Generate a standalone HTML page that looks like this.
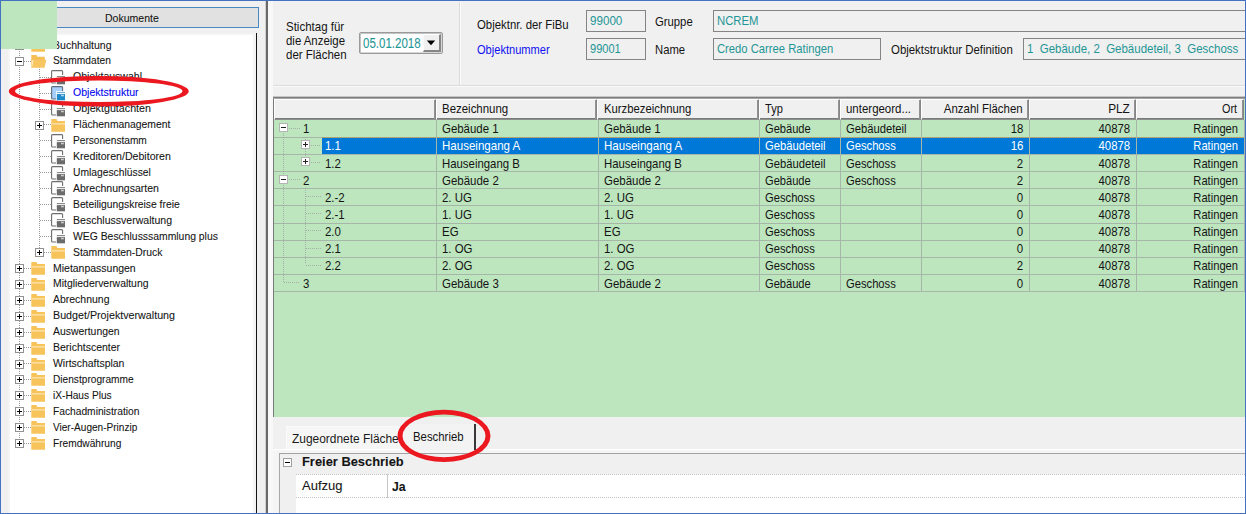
<!DOCTYPE html>
<html lang="de"><head><meta charset="utf-8"><title>Objektstruktur</title>
<style>
html,body{margin:0;padding:0}
body{width:1246px;height:514px;position:relative;overflow:hidden;background:#f0f0f0;font-family:'Liberation Sans',sans-serif;font-size:11px;color:#141414}
div,span.t,svg{position:absolute;box-sizing:border-box}
span.t{white-space:pre;display:block;}
span.k{-webkit-text-stroke:0.08px currentColor}
.hd{background:#f0f0f0;border-top:1px solid #fff;border-left:1px solid #fff;border-right:1px solid #868686;border-bottom:1px solid #8a908a;box-shadow:inset -1px 0 #929292,inset 0 -1px #7a7a7a}
.fld{background:#f0f0f0;border:1px solid #848484}
.ex{width:9px;height:9px;background:#fff;border:1px solid #919191}
.ex i{position:absolute;left:1px;top:2.8px;width:5px;height:1.4px;background:#000}
.ex b{position:absolute;left:2.8px;top:1px;width:1.4px;height:5px;background:#000}
.gx{border-color:#b4b4b4}
.gx i{top:3px;height:1.3px;background:#222}
.gx b{left:2.85px;width:1.3px;background:#222}
.dh{height:1px;background-image:linear-gradient(to right,#9a9a9a 50%,transparent 50%);background-size:2px 1px}
.dv{width:1px;background-image:linear-gradient(to bottom,#9a9a9a 50%,transparent 50%);background-size:1px 2px}
</style></head><body>

<div style="left:8px;top:7px;width:251px;height:21px;background:#e1e1e1;border:1px solid #4a88c2"></div>
<span class="t k" style="top:9.63px;font-size:11.5px;line-height:16px;left:104.9px;transform-origin:0 50%;transform:scaleX(0.9148);">Dokumente</span>
<div style="left:8px;top:33px;width:248px;height:481px;background:#f4f4f4"></div>
<div style="left:10px;top:35px;width:242.5px;height:479px;background:#fff"></div>
<div style="left:256px;top:33px;width:1.4px;height:481px;background:#141414"></div>
<div style="left:265px;top:1px;width:1px;height:513px;background:#d0d0d0"></div>
<div style="left:266px;top:1px;width:2px;height:513px;background:#686868"></div>
<div style="left:268px;top:1px;width:5px;height:513px;background:#f8f8f8"></div>
<div class="dv" style="left:19px;top:45px;width:1px;height:398px;"></div>
<div class="dv" style="left:39px;top:67px;width:1px;height:185px;"></div>
<div class="dh" style="left:24px;top:45px;width:7px;height:1px;"></div>
<div class="ex" style="left:15px;top:41px"><i></i><b></b></div>
<svg style="left:31px;top:38.9px" width="14" height="13" viewBox="0 0 14 13"><path d="M0.3 0h5.3l0.6 2.1H14v10.7H0.3z" fill="#f7c35b"/><rect x="1" y="4.4" width="13" height="1" fill="#fdeec9"/></svg>
<span class="t k" style="top:36.53px;font-size:11.5px;line-height:16px;left:53px;transform-origin:0 50%;transform:scaleX(0.9163);">Buchhaltung</span>
<div class="dh" style="left:24px;top:61px;width:7px;height:1px;"></div>
<div class="ex" style="left:15px;top:57px"><i></i></div>
<svg style="left:31px;top:54.83px" width="16" height="13" viewBox="0 0 16 13"><path d="M0.3 0h5.3l0.6 1.7H13.8v3.2H0.3z" fill="#f5bf56"/><path d="M0.3 4v8.8h1.5V4z" fill="#f5bf56"/><path d="M2 4.8h13.4l-1.9 8H0.4z" fill="#f8c660"/><path d="M2.1 5L0.7 12" stroke="#fff3d8" stroke-width="0.9" fill="none"/></svg>
<span class="t k" style="top:52.46px;font-size:11.5px;line-height:16px;left:53px;transform-origin:0 50%;transform:scaleX(0.8865);">Stammdaten</span>
<div class="dh" style="left:40px;top:77px;width:11px;height:1px;"></div>
<svg style="left:51px;top:69.96px" width="15" height="16" viewBox="0 0 15 16"><path d="M5.5 13H1.6Q0.6 13 0.6 12V1.6Q0.6 0.6 1.6 0.6H10.6Q11.6 0.6 11.6 1.6V5.2" fill="none" stroke="#6e6e6e" stroke-width="1.1"/><rect x="5" y="5.2" width="10" height="10" fill="#fff"/><rect x="5.8" y="6" width="8.2" height="1.1" fill="#8a8a8a"/><rect x="5.8" y="7.1" width="8.2" height="1" fill="#ececec"/><rect x="5.8" y="8.1" width="8.2" height="6.2" fill="#6b6b6b"/><rect x="10" y="8.8" width="2.8" height="1.5" fill="#cdcdcd"/></svg>
<span class="t k" style="top:68.39px;font-size:11.5px;line-height:16px;left:73px;transform-origin:0 50%;transform:scaleX(0.9147);">Objektauswahl</span>
<div class="dh" style="left:40px;top:93px;width:11px;height:1px;"></div>
<svg style="left:51px;top:85.89px" width="15" height="16" viewBox="0 0 15 16"><path d="M5.5 13H1.6Q0.6 13 0.6 12V1.6Q0.6 0.6 1.6 0.6H10.6Q11.6 0.6 11.6 1.6V13H5.5z" fill="#a8cefa" stroke="#5f6f80" stroke-width="1.1"/><rect x="5" y="5.2" width="10" height="10" fill="#fff"/><rect x="5.8" y="6" width="8.2" height="1.1" fill="#6fb2de"/><rect x="5.8" y="7.1" width="8.2" height="1" fill="#eaf4fb"/><rect x="5.8" y="8.1" width="8.2" height="6.2" fill="#1e88c8"/><rect x="10" y="8.8" width="2.8" height="1.5" fill="#b5dcf2"/></svg>
<span class="t k" style="top:84.32px;font-size:11.5px;line-height:16px;left:73px;transform-origin:0 50%;transform:scaleX(0.9151);color:#0000f0;">Objektstruktur</span>
<div class="dh" style="left:40px;top:109px;width:11px;height:1px;"></div>
<svg style="left:51px;top:101.82px" width="15" height="16" viewBox="0 0 15 16"><path d="M5.5 13H1.6Q0.6 13 0.6 12V1.6Q0.6 0.6 1.6 0.6H10.6Q11.6 0.6 11.6 1.6V5.2" fill="none" stroke="#6e6e6e" stroke-width="1.1"/><rect x="5" y="5.2" width="10" height="10" fill="#fff"/><rect x="5.8" y="6" width="8.2" height="1.1" fill="#8a8a8a"/><rect x="5.8" y="7.1" width="8.2" height="1" fill="#ececec"/><rect x="5.8" y="8.1" width="8.2" height="6.2" fill="#6b6b6b"/><rect x="10" y="8.8" width="2.8" height="1.5" fill="#cdcdcd"/></svg>
<span class="t k" style="top:100.25px;font-size:11.5px;line-height:16px;left:73px;transform-origin:0 50%;transform:scaleX(0.9312);">Objektgutachten</span>
<div class="dh" style="left:40px;top:124px;width:11px;height:1px;"></div>
<div class="ex" style="left:35px;top:121px"><i></i><b></b></div>
<svg style="left:51px;top:118.55px" width="14" height="13" viewBox="0 0 14 13"><path d="M0.3 0h5.3l0.6 2.1H14v10.7H0.3z" fill="#f7c35b"/><rect x="1" y="4.4" width="13" height="1" fill="#fdeec9"/></svg>
<span class="t k" style="top:116.18px;font-size:11.5px;line-height:16px;left:73px;transform-origin:0 50%;transform:scaleX(0.9015);">Flächenmanagement</span>
<div class="dh" style="left:40px;top:140px;width:11px;height:1px;"></div>
<svg style="left:51px;top:133.68px" width="15" height="16" viewBox="0 0 15 16"><path d="M5.5 13H1.6Q0.6 13 0.6 12V1.6Q0.6 0.6 1.6 0.6H10.6Q11.6 0.6 11.6 1.6V5.2" fill="none" stroke="#6e6e6e" stroke-width="1.1"/><rect x="5" y="5.2" width="10" height="10" fill="#fff"/><rect x="5.8" y="6" width="8.2" height="1.1" fill="#8a8a8a"/><rect x="5.8" y="7.1" width="8.2" height="1" fill="#ececec"/><rect x="5.8" y="8.1" width="8.2" height="6.2" fill="#6b6b6b"/><rect x="10" y="8.8" width="2.8" height="1.5" fill="#cdcdcd"/></svg>
<span class="t k" style="top:132.11px;font-size:11.5px;line-height:16px;left:73px;transform-origin:0 50%;transform:scaleX(0.8814);">Personenstamm</span>
<div class="dh" style="left:40px;top:156px;width:11px;height:1px;"></div>
<svg style="left:51px;top:149.61px" width="15" height="16" viewBox="0 0 15 16"><path d="M5.5 13H1.6Q0.6 13 0.6 12V1.6Q0.6 0.6 1.6 0.6H10.6Q11.6 0.6 11.6 1.6V5.2" fill="none" stroke="#6e6e6e" stroke-width="1.1"/><rect x="5" y="5.2" width="10" height="10" fill="#fff"/><rect x="5.8" y="6" width="8.2" height="1.1" fill="#8a8a8a"/><rect x="5.8" y="7.1" width="8.2" height="1" fill="#ececec"/><rect x="5.8" y="8.1" width="8.2" height="6.2" fill="#6b6b6b"/><rect x="10" y="8.8" width="2.8" height="1.5" fill="#cdcdcd"/></svg>
<span class="t k" style="top:148.04px;font-size:11.5px;line-height:16px;left:73px;transform-origin:0 50%;transform:scaleX(0.9225);">Kreditoren/Debitoren</span>
<div class="dh" style="left:40px;top:172px;width:11px;height:1px;"></div>
<svg style="left:51px;top:165.54px" width="15" height="16" viewBox="0 0 15 16"><path d="M5.5 13H1.6Q0.6 13 0.6 12V1.6Q0.6 0.6 1.6 0.6H10.6Q11.6 0.6 11.6 1.6V5.2" fill="none" stroke="#6e6e6e" stroke-width="1.1"/><rect x="5" y="5.2" width="10" height="10" fill="#fff"/><rect x="5.8" y="6" width="8.2" height="1.1" fill="#8a8a8a"/><rect x="5.8" y="7.1" width="8.2" height="1" fill="#ececec"/><rect x="5.8" y="8.1" width="8.2" height="6.2" fill="#6b6b6b"/><rect x="10" y="8.8" width="2.8" height="1.5" fill="#cdcdcd"/></svg>
<span class="t k" style="top:163.97px;font-size:11.5px;line-height:16px;left:73px;transform-origin:0 50%;transform:scaleX(0.8949);">Umlageschlüssel</span>
<div class="dh" style="left:40px;top:188px;width:11px;height:1px;"></div>
<svg style="left:51px;top:181.47px" width="15" height="16" viewBox="0 0 15 16"><path d="M5.5 13H1.6Q0.6 13 0.6 12V1.6Q0.6 0.6 1.6 0.6H10.6Q11.6 0.6 11.6 1.6V5.2" fill="none" stroke="#6e6e6e" stroke-width="1.1"/><rect x="5" y="5.2" width="10" height="10" fill="#fff"/><rect x="5.8" y="6" width="8.2" height="1.1" fill="#8a8a8a"/><rect x="5.8" y="7.1" width="8.2" height="1" fill="#ececec"/><rect x="5.8" y="8.1" width="8.2" height="6.2" fill="#6b6b6b"/><rect x="10" y="8.8" width="2.8" height="1.5" fill="#cdcdcd"/></svg>
<span class="t k" style="top:179.9px;font-size:11.5px;line-height:16px;left:73px;transform-origin:0 50%;transform:scaleX(0.914);">Abrechnungsarten</span>
<div class="dh" style="left:40px;top:204px;width:11px;height:1px;"></div>
<svg style="left:51px;top:197.4px" width="15" height="16" viewBox="0 0 15 16"><path d="M5.5 13H1.6Q0.6 13 0.6 12V1.6Q0.6 0.6 1.6 0.6H10.6Q11.6 0.6 11.6 1.6V5.2" fill="none" stroke="#6e6e6e" stroke-width="1.1"/><rect x="5" y="5.2" width="10" height="10" fill="#fff"/><rect x="5.8" y="6" width="8.2" height="1.1" fill="#8a8a8a"/><rect x="5.8" y="7.1" width="8.2" height="1" fill="#ececec"/><rect x="5.8" y="8.1" width="8.2" height="6.2" fill="#6b6b6b"/><rect x="10" y="8.8" width="2.8" height="1.5" fill="#cdcdcd"/></svg>
<span class="t k" style="top:195.83px;font-size:11.5px;line-height:16px;left:73px;transform-origin:0 50%;transform:scaleX(0.8973);">Beteiligungskreise freie</span>
<div class="dh" style="left:40px;top:220px;width:11px;height:1px;"></div>
<svg style="left:51px;top:213.33px" width="15" height="16" viewBox="0 0 15 16"><path d="M5.5 13H1.6Q0.6 13 0.6 12V1.6Q0.6 0.6 1.6 0.6H10.6Q11.6 0.6 11.6 1.6V5.2" fill="none" stroke="#6e6e6e" stroke-width="1.1"/><rect x="5" y="5.2" width="10" height="10" fill="#fff"/><rect x="5.8" y="6" width="8.2" height="1.1" fill="#8a8a8a"/><rect x="5.8" y="7.1" width="8.2" height="1" fill="#ececec"/><rect x="5.8" y="8.1" width="8.2" height="6.2" fill="#6b6b6b"/><rect x="10" y="8.8" width="2.8" height="1.5" fill="#cdcdcd"/></svg>
<span class="t k" style="top:211.76px;font-size:11.5px;line-height:16px;left:73px;transform-origin:0 50%;transform:scaleX(0.9164);">Beschlussverwaltung</span>
<div class="dh" style="left:40px;top:236px;width:11px;height:1px;"></div>
<svg style="left:51px;top:229.26px" width="15" height="16" viewBox="0 0 15 16"><path d="M5.5 13H1.6Q0.6 13 0.6 12V1.6Q0.6 0.6 1.6 0.6H10.6Q11.6 0.6 11.6 1.6V5.2" fill="none" stroke="#6e6e6e" stroke-width="1.1"/><rect x="5" y="5.2" width="10" height="10" fill="#fff"/><rect x="5.8" y="6" width="8.2" height="1.1" fill="#8a8a8a"/><rect x="5.8" y="7.1" width="8.2" height="1" fill="#ececec"/><rect x="5.8" y="8.1" width="8.2" height="6.2" fill="#6b6b6b"/><rect x="10" y="8.8" width="2.8" height="1.5" fill="#cdcdcd"/></svg>
<span class="t k" style="top:227.69px;font-size:11.5px;line-height:16px;left:73px;transform-origin:0 50%;transform:scaleX(0.9032);">WEG Beschlusssammlung plus</span>
<div class="dh" style="left:40px;top:252px;width:11px;height:1px;"></div>
<div class="ex" style="left:35px;top:248px"><i></i><b></b></div>
<svg style="left:51px;top:245.99px" width="14" height="13" viewBox="0 0 14 13"><path d="M0.3 0h5.3l0.6 2.1H14v10.7H0.3z" fill="#f7c35b"/><rect x="1" y="4.4" width="13" height="1" fill="#fdeec9"/></svg>
<span class="t k" style="top:243.62px;font-size:11.5px;line-height:16px;left:73px;transform-origin:0 50%;transform:scaleX(0.9025);">Stammdaten-Druck</span>
<div class="dh" style="left:24px;top:268px;width:7px;height:1px;"></div>
<div class="ex" style="left:15px;top:264px"><i></i><b></b></div>
<svg style="left:31px;top:261.92px" width="14" height="13" viewBox="0 0 14 13"><path d="M0.3 0h5.3l0.6 2.1H14v10.7H0.3z" fill="#f7c35b"/><rect x="1" y="4.4" width="13" height="1" fill="#fdeec9"/></svg>
<span class="t k" style="top:259.55px;font-size:11.5px;line-height:16px;left:53px;transform-origin:0 50%;transform:scaleX(0.9108);">Mietanpassungen</span>
<div class="dh" style="left:24px;top:284px;width:7px;height:1px;"></div>
<div class="ex" style="left:15px;top:280px"><i></i><b></b></div>
<svg style="left:31px;top:277.85px" width="14" height="13" viewBox="0 0 14 13"><path d="M0.3 0h5.3l0.6 2.1H14v10.7H0.3z" fill="#f7c35b"/><rect x="1" y="4.4" width="13" height="1" fill="#fdeec9"/></svg>
<span class="t k" style="top:275.48px;font-size:11.5px;line-height:16px;left:53px;transform-origin:0 50%;transform:scaleX(0.9055);">Mitgliederverwaltung</span>
<div class="dh" style="left:24px;top:300px;width:7px;height:1px;"></div>
<div class="ex" style="left:15px;top:296px"><i></i><b></b></div>
<svg style="left:31px;top:293.78px" width="14" height="13" viewBox="0 0 14 13"><path d="M0.3 0h5.3l0.6 2.1H14v10.7H0.3z" fill="#f7c35b"/><rect x="1" y="4.4" width="13" height="1" fill="#fdeec9"/></svg>
<span class="t k" style="top:291.41px;font-size:11.5px;line-height:16px;left:53px;transform-origin:0 50%;transform:scaleX(0.9108);">Abrechnung</span>
<div class="dh" style="left:24px;top:316px;width:7px;height:1px;"></div>
<div class="ex" style="left:15px;top:312px"><i></i><b></b></div>
<svg style="left:31px;top:309.71px" width="14" height="13" viewBox="0 0 14 13"><path d="M0.3 0h5.3l0.6 2.1H14v10.7H0.3z" fill="#f7c35b"/><rect x="1" y="4.4" width="13" height="1" fill="#fdeec9"/></svg>
<span class="t k" style="top:307.34px;font-size:11.5px;line-height:16px;left:53px;transform-origin:0 50%;transform:scaleX(0.9309);">Budget/Projektverwaltung</span>
<div class="dh" style="left:24px;top:332px;width:7px;height:1px;"></div>
<div class="ex" style="left:15px;top:328px"><i></i><b></b></div>
<svg style="left:31px;top:325.64px" width="14" height="13" viewBox="0 0 14 13"><path d="M0.3 0h5.3l0.6 2.1H14v10.7H0.3z" fill="#f7c35b"/><rect x="1" y="4.4" width="13" height="1" fill="#fdeec9"/></svg>
<span class="t k" style="top:323.27px;font-size:11.5px;line-height:16px;left:53px;transform-origin:0 50%;transform:scaleX(0.9057);">Auswertungen</span>
<div class="dh" style="left:24px;top:347px;width:7px;height:1px;"></div>
<div class="ex" style="left:15px;top:344px"><i></i><b></b></div>
<svg style="left:31px;top:341.57px" width="14" height="13" viewBox="0 0 14 13"><path d="M0.3 0h5.3l0.6 2.1H14v10.7H0.3z" fill="#f7c35b"/><rect x="1" y="4.4" width="13" height="1" fill="#fdeec9"/></svg>
<span class="t k" style="top:339.2px;font-size:11.5px;line-height:16px;left:53px;transform-origin:0 50%;transform:scaleX(0.9127);">Berichtscenter</span>
<div class="dh" style="left:24px;top:363px;width:7px;height:1px;"></div>
<div class="ex" style="left:15px;top:360px"><i></i><b></b></div>
<svg style="left:31px;top:357.5px" width="14" height="13" viewBox="0 0 14 13"><path d="M0.3 0h5.3l0.6 2.1H14v10.7H0.3z" fill="#f7c35b"/><rect x="1" y="4.4" width="13" height="1" fill="#fdeec9"/></svg>
<span class="t k" style="top:355.13px;font-size:11.5px;line-height:16px;left:53px;transform-origin:0 50%;transform:scaleX(0.9083);">Wirtschaftsplan</span>
<div class="dh" style="left:24px;top:379px;width:7px;height:1px;"></div>
<div class="ex" style="left:15px;top:375px"><i></i><b></b></div>
<svg style="left:31px;top:373.43px" width="14" height="13" viewBox="0 0 14 13"><path d="M0.3 0h5.3l0.6 2.1H14v10.7H0.3z" fill="#f7c35b"/><rect x="1" y="4.4" width="13" height="1" fill="#fdeec9"/></svg>
<span class="t k" style="top:371.06px;font-size:11.5px;line-height:16px;left:53px;transform-origin:0 50%;transform:scaleX(0.8818);">Dienstprogramme</span>
<div class="dh" style="left:24px;top:395px;width:7px;height:1px;"></div>
<div class="ex" style="left:15px;top:391px"><i></i><b></b></div>
<svg style="left:31px;top:389.36px" width="14" height="13" viewBox="0 0 14 13"><path d="M0.3 0h5.3l0.6 2.1H14v10.7H0.3z" fill="#f7c35b"/><rect x="1" y="4.4" width="13" height="1" fill="#fdeec9"/></svg>
<span class="t k" style="top:386.99px;font-size:11.5px;line-height:16px;left:53px;transform-origin:0 50%;transform:scaleX(0.8816);">iX-Haus Plus</span>
<div class="dh" style="left:24px;top:411px;width:7px;height:1px;"></div>
<div class="ex" style="left:15px;top:407px"><i></i><b></b></div>
<svg style="left:31px;top:405.29px" width="14" height="13" viewBox="0 0 14 13"><path d="M0.3 0h5.3l0.6 2.1H14v10.7H0.3z" fill="#f7c35b"/><rect x="1" y="4.4" width="13" height="1" fill="#fdeec9"/></svg>
<span class="t k" style="top:402.92px;font-size:11.5px;line-height:16px;left:53px;transform-origin:0 50%;transform:scaleX(0.8893);">Fachadministration</span>
<div class="dh" style="left:24px;top:427px;width:7px;height:1px;"></div>
<div class="ex" style="left:15px;top:423px"><i></i><b></b></div>
<svg style="left:31px;top:421.22px" width="14" height="13" viewBox="0 0 14 13"><path d="M0.3 0h5.3l0.6 2.1H14v10.7H0.3z" fill="#f7c35b"/><rect x="1" y="4.4" width="13" height="1" fill="#fdeec9"/></svg>
<span class="t k" style="top:418.85px;font-size:11.5px;line-height:16px;left:53px;transform-origin:0 50%;transform:scaleX(0.8753);">Vier-Augen-Prinzip</span>
<div class="dh" style="left:24px;top:443px;width:7px;height:1px;"></div>
<div class="ex" style="left:15px;top:439px"><i></i><b></b></div>
<svg style="left:31px;top:437.15px" width="14" height="13" viewBox="0 0 14 13"><path d="M0.3 0h5.3l0.6 2.1H14v10.7H0.3z" fill="#f7c35b"/><rect x="1" y="4.4" width="13" height="1" fill="#fdeec9"/></svg>
<span class="t k" style="top:434.78px;font-size:11.5px;line-height:16px;left:53px;transform-origin:0 50%;transform:scaleX(0.8831);">Fremdwährung</span>
<svg style="left:6px;top:73px" width="185" height="35" viewBox="6 73 185 35"><path fill-rule="evenodd" fill="#ec1820" d="M8.75 91.25a90 15.3 0 1 0 180 0a90 15.3 0 1 0 -180 0zM15.049999999999997 91.25a83.7 10.8 0 1 0 167.4 0a83.7 10.8 0 1 0 -167.4 0z"/></svg>
<div style="left:1px;top:1px;width:56px;height:47.5px;background:#bde5be"></div>
<div style="left:273px;top:85px;width:973px;height:1px;background:#dcdcdc"></div>
<div style="left:273px;top:86px;width:973px;height:1px;background:#fbfbfb"></div>
<div style="left:459px;top:2px;width:1px;height:83px;background:#dcdcdc"></div>
<div style="left:460px;top:2px;width:1px;height:83px;background:#fbfbfb"></div>
<span class="t" style="top:19.35px;font-size:13px;line-height:16px;left:286px;transform-origin:0 50%;transform:scaleX(0.885);">Stichtag für</span>
<span class="t" style="top:33.15px;font-size:13px;line-height:16px;left:286px;transform-origin:0 50%;transform:scaleX(0.8775);">die Anzeige</span>
<span class="t" style="top:46.65px;font-size:13px;line-height:16px;left:286px;transform-origin:0 50%;transform:scaleX(0.8827);">der Flächen</span>
<div style="left:359px;top:32px;width:84px;height:22px;background:#fff;border:1px solid #9a9a9a;border-radius:2px;box-shadow:inset 1px 1px 0 #c4c4c4,inset -1px -1px 0 #d8d8d8"></div>
<span class="t k" style="top:34.6px;font-size:14px;line-height:16px;left:363.2px;transform-origin:0 50%;transform:scaleX(0.8219);color:#1f9696;">05.01.2018</span>
<div style="left:423px;top:34px;width:18px;height:18px;background:#f0f0f0;border-top:1px solid #fff;border-left:1px solid #fff;border-right:2px solid #868686;border-bottom:2px solid #868686"></div>
<svg style="left:426px;top:40px" width="10" height="6" viewBox="0 0 10 6"><path d="M0.8 0.6h8.4L5 5.2z" fill="#000"/></svg>
<span class="t" style="top:17.15px;font-size:13px;line-height:16px;left:477px;transform-origin:0 50%;transform:scaleX(0.8752);">Objektnr. der FiBu</span>
<span class="t" style="top:41.65px;font-size:13px;line-height:16px;left:477px;transform-origin:0 50%;transform:scaleX(0.8516);color:#1010f0;">Objektnummer</span>
<div class="fld" style="left:586px;top:10px;width:60px;height:22px;"></div>
<div class="fld" style="left:586px;top:38px;width:60px;height:22px;"></div>
<span class="t" style="top:12.65px;font-size:13.5px;line-height:16px;left:590px;transform-origin:0 50%;transform:scaleX(0.8603);color:#1f9696;">99000</span>
<span class="t" style="top:40.65px;font-size:13.5px;line-height:16px;left:590px;transform-origin:0 50%;transform:scaleX(0.8176);color:#1f9696;">99001</span>
<span class="t" style="top:13.65px;font-size:13px;line-height:16px;left:655px;transform-origin:0 50%;transform:scaleX(0.8692);">Gruppe</span>
<span class="t" style="top:41.65px;font-size:13px;line-height:16px;left:655px;transform-origin:0 50%;transform:scaleX(0.8677);">Name</span>
<div class="fld" style="left:713px;top:10px;width:538px;height:22px;"></div>
<div class="fld" style="left:713px;top:38px;width:168px;height:22px;"></div>
<span class="t" style="top:12.65px;font-size:13.5px;line-height:16px;left:717px;transform-origin:0 50%;transform:scaleX(0.8384);color:#1f9696;">NCREM</span>
<span class="t" style="top:40.65px;font-size:13.5px;line-height:16px;left:717px;transform-origin:0 50%;transform:scaleX(0.8325);color:#1f9696;">Credo Carree Ratingen</span>
<span class="t" style="top:41.65px;font-size:13px;line-height:16px;left:891px;transform-origin:0 50%;transform:scaleX(0.8779);">Objektstruktur Definition</span>
<div class="fld" style="left:1023px;top:38px;width:228px;height:22px;"></div>
<span class="t" style="top:40.65px;font-size:13.5px;line-height:16px;left:1026.5px;transform-origin:0 50%;transform:scaleX(0.8506);color:#1f9696;">1  Gebäude, 2  Gebäudeteil, 3  Geschoss</span>
<div style="left:273px;top:96px;width:973px;height:1px;background:#c6c6c6"></div>
<div style="left:273px;top:97px;width:973px;height:320px;background:#bde5be;border-left:1px solid #7a7a7a;border-top:1px solid #7e7e7e"></div>
<div style="left:273px;top:98px;width:973px;height:1px;background:#a6a6a6"></div>
<div class="hd" style="left:274px;top:99px;width:162px;height:21px;"></div>
<div class="hd" style="left:436px;top:99px;width:161px;height:21px;"></div>
<span class="t" style="top:101.25px;font-size:13px;line-height:16px;left:442.1px;transform-origin:0 50%;transform:scaleX(0.8806);">Bezeichnung</span>
<div class="hd" style="left:597px;top:99px;width:162px;height:21px;"></div>
<span class="t" style="top:101.25px;font-size:13px;line-height:16px;left:603.6999999999999px;transform-origin:0 50%;transform:scaleX(0.8689);">Kurzbezeichnung</span>
<div class="hd" style="left:759px;top:99px;width:81px;height:21px;"></div>
<span class="t" style="top:101.25px;font-size:13px;line-height:16px;left:765.0999999999999px;transform-origin:0 50%;transform:scaleX(0.8537);">Typ</span>
<div class="hd" style="left:840px;top:99px;width:81px;height:21px;"></div>
<span class="t" style="top:101.25px;font-size:13px;line-height:16px;left:846.0px;transform-origin:0 50%;transform:scaleX(0.8817);">untergeord...</span>
<div class="hd" style="left:921px;top:99px;width:108px;height:21px;"></div>
<span class="t" style="top:101.25px;font-size:13px;line-height:16px;right:223.7px;transform-origin:100% 50%;transform:scaleX(0.8792);">Anzahl Flächen</span>
<div class="hd" style="left:1029px;top:99px;width:107px;height:21px;"></div>
<span class="t" style="top:101.25px;font-size:13px;line-height:16px;right:116.0px;transform-origin:100% 50%;transform:scaleX(0.9101);">PLZ</span>
<div class="hd" style="left:1136px;top:99px;width:108px;height:21px;"></div>
<span class="t" style="top:101.25px;font-size:13px;line-height:16px;right:9.0px;transform-origin:100% 50%;transform:scaleX(0.8304);">Ort</span>
<div style="left:322px;top:137px;width:924px;height:17px;background:#0078d7"></div>
<div style="left:274px;top:137px;width:972px;height:1px;background:#a6b6a8"></div>
<div style="left:274px;top:154px;width:972px;height:1px;background:#a6b6a8"></div>
<div style="left:274px;top:171px;width:972px;height:1px;background:#a6b6a8"></div>
<div style="left:274px;top:188px;width:972px;height:1px;background:#a6b6a8"></div>
<div style="left:274px;top:205px;width:972px;height:1px;background:#a6b6a8"></div>
<div style="left:274px;top:223px;width:972px;height:1px;background:#a6b6a8"></div>
<div style="left:274px;top:240px;width:972px;height:1px;background:#a6b6a8"></div>
<div style="left:274px;top:257px;width:972px;height:1px;background:#a6b6a8"></div>
<div style="left:274px;top:274px;width:972px;height:1px;background:#a6b6a8"></div>
<div style="left:274px;top:291px;width:972px;height:1px;background:#a6b6a8"></div>
<div style="left:322px;top:137px;width:924px;height:1px;background-image:linear-gradient(to right,#c9a45c 50%,#8f9f8f 50%);background-size:2px 1px"></div>
<div style="left:436px;top:120px;width:1px;height:171px;background:#a6b6a8"></div>
<div style="left:598px;top:120px;width:1px;height:171px;background:#a6b6a8"></div>
<div style="left:759px;top:120px;width:1px;height:171px;background:#a6b6a8"></div>
<div style="left:840px;top:120px;width:1px;height:171px;background:#a6b6a8"></div>
<div style="left:921px;top:120px;width:1px;height:171px;background:#a6b6a8"></div>
<div style="left:1029px;top:120px;width:1px;height:171px;background:#a6b6a8"></div>
<div style="left:1136px;top:120px;width:1px;height:171px;background:#a6b6a8"></div>
<div style="left:1244px;top:120px;width:1px;height:171px;background:#a6b6a8"></div>
<div class="dv" style="left:283px;top:133px;width:1px;height:149px;opacity:.7"></div>
<div class="dv" style="left:305px;top:188px;width:1px;height:76px;opacity:.7"></div>
<div class="dv" style="left:305px;top:137px;width:1px;height:25px;opacity:.7"></div>
<div class="ex gx" style="left:279px;top:123px"><i></i></div>
<div class="dh" style="left:289px;top:128px;width:11px;height:1px;opacity:.7"></div>
<span class="t" style="top:121.23px;font-size:13px;line-height:16px;left:303px;transform-origin:0 50%;transform:scaleX(0.88);">1</span>
<span class="t" style="top:121.23px;font-size:13px;line-height:16px;left:442.0px;transform-origin:0 50%;transform:scaleX(0.8797);">Gebäude 1</span>
<span class="t" style="top:121.23px;font-size:13px;line-height:16px;left:603.6px;transform-origin:0 50%;transform:scaleX(0.8797);">Gebäude 1</span>
<span class="t" style="top:121.23px;font-size:13px;line-height:16px;left:765.0px;transform-origin:0 50%;transform:scaleX(0.8542);">Gebäude</span>
<span class="t" style="top:121.23px;font-size:13px;line-height:16px;left:845.9000000000001px;transform-origin:0 50%;transform:scaleX(0.8642);">Gebäudeteil</span>
<span class="t" style="top:121.23px;font-size:13px;line-height:16px;right:222.4px;transform-origin:100% 50%;transform:scaleX(0.88);">18</span>
<span class="t" style="top:121.23px;font-size:13px;line-height:16px;right:115.6px;transform-origin:100% 50%;transform:scaleX(0.8768);">40878</span>
<span class="t" style="top:121.23px;font-size:13px;line-height:16px;right:8.3px;transform-origin:100% 50%;transform:scaleX(0.8588);">Ratingen</span>
<div class="ex gx" style="left:301px;top:140px"><i></i><b></b></div>
<div class="dh" style="left:311px;top:145px;width:10px;height:1px;opacity:.7"></div>
<span class="t" style="top:138.38px;font-size:13px;line-height:16px;left:325px;transform-origin:0 50%;transform:scaleX(0.88);color:#fff;">1.1</span>
<span class="t" style="top:138.38px;font-size:13px;line-height:16px;left:442.0px;transform-origin:0 50%;transform:scaleX(0.8879);color:#fff;">Hauseingang A</span>
<span class="t" style="top:138.38px;font-size:13px;line-height:16px;left:603.6px;transform-origin:0 50%;transform:scaleX(0.8879);color:#fff;">Hauseingang A</span>
<span class="t" style="top:138.38px;font-size:13px;line-height:16px;left:765.0px;transform-origin:0 50%;transform:scaleX(0.8642);color:#fff;">Gebäudeteil</span>
<span class="t" style="top:138.38px;font-size:13px;line-height:16px;left:845.9000000000001px;transform-origin:0 50%;transform:scaleX(0.8614);color:#fff;">Geschoss</span>
<span class="t" style="top:138.38px;font-size:13px;line-height:16px;right:222.4px;transform-origin:100% 50%;transform:scaleX(0.88);color:#fff;">16</span>
<span class="t" style="top:138.38px;font-size:13px;line-height:16px;right:115.6px;transform-origin:100% 50%;transform:scaleX(0.8768);color:#fff;">40878</span>
<span class="t" style="top:138.38px;font-size:13px;line-height:16px;right:8.3px;transform-origin:100% 50%;transform:scaleX(0.8588);color:#fff;">Ratingen</span>
<div class="ex gx" style="left:301px;top:157px"><i></i><b></b></div>
<div class="dh" style="left:311px;top:162px;width:10px;height:1px;opacity:.7"></div>
<span class="t" style="top:155.53px;font-size:13px;line-height:16px;left:325px;transform-origin:0 50%;transform:scaleX(0.88);">1.2</span>
<span class="t" style="top:155.53px;font-size:13px;line-height:16px;left:442.0px;transform-origin:0 50%;transform:scaleX(0.8751);">Hauseingang B</span>
<span class="t" style="top:155.53px;font-size:13px;line-height:16px;left:603.6px;transform-origin:0 50%;transform:scaleX(0.8751);">Hauseingang B</span>
<span class="t" style="top:155.53px;font-size:13px;line-height:16px;left:765.0px;transform-origin:0 50%;transform:scaleX(0.8642);">Gebäudeteil</span>
<span class="t" style="top:155.53px;font-size:13px;line-height:16px;left:845.9000000000001px;transform-origin:0 50%;transform:scaleX(0.8614);">Geschoss</span>
<span class="t" style="top:155.53px;font-size:13px;line-height:16px;right:222.4px;transform-origin:100% 50%;transform:scaleX(0.88);">2</span>
<span class="t" style="top:155.53px;font-size:13px;line-height:16px;right:115.6px;transform-origin:100% 50%;transform:scaleX(0.8768);">40878</span>
<span class="t" style="top:155.53px;font-size:13px;line-height:16px;right:8.3px;transform-origin:100% 50%;transform:scaleX(0.8588);">Ratingen</span>
<div class="ex gx" style="left:279px;top:175px"><i></i></div>
<div class="dh" style="left:289px;top:179px;width:11px;height:1px;opacity:.7"></div>
<span class="t" style="top:172.68px;font-size:13px;line-height:16px;left:303px;transform-origin:0 50%;transform:scaleX(0.88);">2</span>
<span class="t" style="top:172.68px;font-size:13px;line-height:16px;left:442.0px;transform-origin:0 50%;transform:scaleX(0.8828);">Gebäude 2</span>
<span class="t" style="top:172.68px;font-size:13px;line-height:16px;left:603.6px;transform-origin:0 50%;transform:scaleX(0.8828);">Gebäude 2</span>
<span class="t" style="top:172.68px;font-size:13px;line-height:16px;left:765.0px;transform-origin:0 50%;transform:scaleX(0.8542);">Gebäude</span>
<span class="t" style="top:172.68px;font-size:13px;line-height:16px;left:845.9000000000001px;transform-origin:0 50%;transform:scaleX(0.8614);">Geschoss</span>
<span class="t" style="top:172.68px;font-size:13px;line-height:16px;right:222.4px;transform-origin:100% 50%;transform:scaleX(0.88);">2</span>
<span class="t" style="top:172.68px;font-size:13px;line-height:16px;right:115.6px;transform-origin:100% 50%;transform:scaleX(0.8768);">40878</span>
<span class="t" style="top:172.68px;font-size:13px;line-height:16px;right:8.3px;transform-origin:100% 50%;transform:scaleX(0.8588);">Ratingen</span>
<div class="dh" style="left:306px;top:196px;width:16px;height:1px;opacity:.7"></div>
<span class="t" style="top:189.83px;font-size:13px;line-height:16px;left:325px;transform-origin:0 50%;transform:scaleX(0.88);">2.-2</span>
<span class="t" style="top:189.83px;font-size:13px;line-height:16px;left:442.0px;transform-origin:0 50%;transform:scaleX(0.88);">2. UG</span>
<span class="t" style="top:189.83px;font-size:13px;line-height:16px;left:603.6px;transform-origin:0 50%;transform:scaleX(0.88);">2. UG</span>
<span class="t" style="top:189.83px;font-size:13px;line-height:16px;left:765.0px;transform-origin:0 50%;transform:scaleX(0.8614);">Geschoss</span>
<span class="t" style="top:189.83px;font-size:13px;line-height:16px;left:845.9000000000001px;transform-origin:0 50%;transform:scaleX(0.88);"></span>
<span class="t" style="top:189.83px;font-size:13px;line-height:16px;right:222.4px;transform-origin:100% 50%;transform:scaleX(0.88);">0</span>
<span class="t" style="top:189.83px;font-size:13px;line-height:16px;right:115.6px;transform-origin:100% 50%;transform:scaleX(0.8768);">40878</span>
<span class="t" style="top:189.83px;font-size:13px;line-height:16px;right:8.3px;transform-origin:100% 50%;transform:scaleX(0.8588);">Ratingen</span>
<div class="dh" style="left:306px;top:213px;width:16px;height:1px;opacity:.7"></div>
<span class="t" style="top:206.98px;font-size:13px;line-height:16px;left:325px;transform-origin:0 50%;transform:scaleX(0.88);">2.-1</span>
<span class="t" style="top:206.98px;font-size:13px;line-height:16px;left:442.0px;transform-origin:0 50%;transform:scaleX(0.88);">1. UG</span>
<span class="t" style="top:206.98px;font-size:13px;line-height:16px;left:603.6px;transform-origin:0 50%;transform:scaleX(0.88);">1. UG</span>
<span class="t" style="top:206.98px;font-size:13px;line-height:16px;left:765.0px;transform-origin:0 50%;transform:scaleX(0.8614);">Geschoss</span>
<span class="t" style="top:206.98px;font-size:13px;line-height:16px;left:845.9000000000001px;transform-origin:0 50%;transform:scaleX(0.88);"></span>
<span class="t" style="top:206.98px;font-size:13px;line-height:16px;right:222.4px;transform-origin:100% 50%;transform:scaleX(0.88);">0</span>
<span class="t" style="top:206.98px;font-size:13px;line-height:16px;right:115.6px;transform-origin:100% 50%;transform:scaleX(0.8768);">40878</span>
<span class="t" style="top:206.98px;font-size:13px;line-height:16px;right:8.3px;transform-origin:100% 50%;transform:scaleX(0.8588);">Ratingen</span>
<div class="dh" style="left:306px;top:230px;width:16px;height:1px;opacity:.7"></div>
<span class="t" style="top:224.13px;font-size:13px;line-height:16px;left:325px;transform-origin:0 50%;transform:scaleX(0.88);">2.0</span>
<span class="t" style="top:224.13px;font-size:13px;line-height:16px;left:442.0px;transform-origin:0 50%;transform:scaleX(0.88);">EG</span>
<span class="t" style="top:224.13px;font-size:13px;line-height:16px;left:603.6px;transform-origin:0 50%;transform:scaleX(0.88);">EG</span>
<span class="t" style="top:224.13px;font-size:13px;line-height:16px;left:765.0px;transform-origin:0 50%;transform:scaleX(0.8614);">Geschoss</span>
<span class="t" style="top:224.13px;font-size:13px;line-height:16px;left:845.9000000000001px;transform-origin:0 50%;transform:scaleX(0.88);"></span>
<span class="t" style="top:224.13px;font-size:13px;line-height:16px;right:222.4px;transform-origin:100% 50%;transform:scaleX(0.88);">0</span>
<span class="t" style="top:224.13px;font-size:13px;line-height:16px;right:115.6px;transform-origin:100% 50%;transform:scaleX(0.8768);">40878</span>
<span class="t" style="top:224.13px;font-size:13px;line-height:16px;right:8.3px;transform-origin:100% 50%;transform:scaleX(0.8588);">Ratingen</span>
<div class="dh" style="left:306px;top:248px;width:16px;height:1px;opacity:.7"></div>
<span class="t" style="top:241.28px;font-size:13px;line-height:16px;left:325px;transform-origin:0 50%;transform:scaleX(0.88);">2.1</span>
<span class="t" style="top:241.28px;font-size:13px;line-height:16px;left:442.0px;transform-origin:0 50%;transform:scaleX(0.88);">1. OG</span>
<span class="t" style="top:241.28px;font-size:13px;line-height:16px;left:603.6px;transform-origin:0 50%;transform:scaleX(0.88);">1. OG</span>
<span class="t" style="top:241.28px;font-size:13px;line-height:16px;left:765.0px;transform-origin:0 50%;transform:scaleX(0.8614);">Geschoss</span>
<span class="t" style="top:241.28px;font-size:13px;line-height:16px;left:845.9000000000001px;transform-origin:0 50%;transform:scaleX(0.88);"></span>
<span class="t" style="top:241.28px;font-size:13px;line-height:16px;right:222.4px;transform-origin:100% 50%;transform:scaleX(0.88);">0</span>
<span class="t" style="top:241.28px;font-size:13px;line-height:16px;right:115.6px;transform-origin:100% 50%;transform:scaleX(0.8768);">40878</span>
<span class="t" style="top:241.28px;font-size:13px;line-height:16px;right:8.3px;transform-origin:100% 50%;transform:scaleX(0.8588);">Ratingen</span>
<div class="dh" style="left:306px;top:265px;width:16px;height:1px;opacity:.7"></div>
<span class="t" style="top:258.43px;font-size:13px;line-height:16px;left:325px;transform-origin:0 50%;transform:scaleX(0.88);">2.2</span>
<span class="t" style="top:258.43px;font-size:13px;line-height:16px;left:442.0px;transform-origin:0 50%;transform:scaleX(0.88);">2. OG</span>
<span class="t" style="top:258.43px;font-size:13px;line-height:16px;left:603.6px;transform-origin:0 50%;transform:scaleX(0.88);">2. OG</span>
<span class="t" style="top:258.43px;font-size:13px;line-height:16px;left:765.0px;transform-origin:0 50%;transform:scaleX(0.8614);">Geschoss</span>
<span class="t" style="top:258.43px;font-size:13px;line-height:16px;left:845.9000000000001px;transform-origin:0 50%;transform:scaleX(0.88);"></span>
<span class="t" style="top:258.43px;font-size:13px;line-height:16px;right:222.4px;transform-origin:100% 50%;transform:scaleX(0.88);">2</span>
<span class="t" style="top:258.43px;font-size:13px;line-height:16px;right:115.6px;transform-origin:100% 50%;transform:scaleX(0.8768);">40878</span>
<span class="t" style="top:258.43px;font-size:13px;line-height:16px;right:8.3px;transform-origin:100% 50%;transform:scaleX(0.8588);">Ratingen</span>
<div class="dh" style="left:284px;top:282px;width:16px;height:1px;opacity:.7"></div>
<span class="t" style="top:275.58px;font-size:13px;line-height:16px;left:303px;transform-origin:0 50%;transform:scaleX(0.88);">3</span>
<span class="t" style="top:275.58px;font-size:13px;line-height:16px;left:442.0px;transform-origin:0 50%;transform:scaleX(0.8828);">Gebäude 3</span>
<span class="t" style="top:275.58px;font-size:13px;line-height:16px;left:603.6px;transform-origin:0 50%;transform:scaleX(0.8828);">Gebäude 2</span>
<span class="t" style="top:275.58px;font-size:13px;line-height:16px;left:765.0px;transform-origin:0 50%;transform:scaleX(0.8542);">Gebäude</span>
<span class="t" style="top:275.58px;font-size:13px;line-height:16px;left:845.9000000000001px;transform-origin:0 50%;transform:scaleX(0.8614);">Geschoss</span>
<span class="t" style="top:275.58px;font-size:13px;line-height:16px;right:222.4px;transform-origin:100% 50%;transform:scaleX(0.88);">0</span>
<span class="t" style="top:275.58px;font-size:13px;line-height:16px;right:115.6px;transform-origin:100% 50%;transform:scaleX(0.8768);">40878</span>
<span class="t" style="top:275.58px;font-size:13px;line-height:16px;right:8.3px;transform-origin:100% 50%;transform:scaleX(0.8588);">Ratingen</span>
<div style="left:286px;top:426px;width:116px;height:24px;background:#f6f6f6;border:1px solid #fafafa;border-bottom:none"></div>
<span class="t" style="top:430.95px;font-size:13px;line-height:16px;left:292px;transform-origin:0 50%;transform:scaleX(0.9175);color:#1a1a1a;">Zugeordnete Flächen</span>
<div style="left:273px;top:449px;width:973px;height:1px;background:#fff"></div>
<div style="left:273px;top:450px;width:973px;height:64px;background:#f5f5f5"></div>
<div style="left:279px;top:453px;width:967px;height:61px;background:#f0f0f0;border-left:1px solid #a8a8a8;border-top:1px solid #a2a2a2"></div>
<div style="left:296px;top:474px;width:950px;height:40px;background:#fff"></div>
<div class="dh" style="left:296px;top:474px;width:950px;height:1px;opacity:.6"></div>
<div class="dh" style="left:296px;top:497px;width:950px;height:1px;opacity:.6"></div>
<div style="left:387px;top:474px;width:1px;height:24px;background:#c8c8c8"></div>
<div class="ex" style="left:283px;top:458px;border-color:#a0a0a0"><i></i></div>
<span class="t k" style="top:454.11px;font-size:13px;line-height:16px;left:302px;transform-origin:0 50%;transform:scaleX(0.9911);font-weight:bold;">Freier Beschrieb</span>
<span class="t k" style="top:477.51px;font-size:13px;line-height:16px;left:302px;transform-origin:0 50%;transform:scaleX(1.0004);">Aufzug</span>
<span class="t k" style="top:478.61px;font-size:13px;line-height:16px;left:392px;transform-origin:0 50%;transform:scaleX(0.94);font-weight:bold;">Ja</span>
<div style="left:401px;top:424px;width:75px;height:26px;background:#f3f3f3;border-right:2px solid #383838"></div>
<span class="t" style="top:429.15px;font-size:13px;line-height:16px;left:413px;transform-origin:0 50%;transform:scaleX(0.8752);">Beschrieb</span>
<svg style="left:395px;top:407px" width="98" height="57" viewBox="395 407 98 57"><path fill-rule="evenodd" fill="#ec1820" d="M397.5 435.9a46.5 26.1 0 1 0 93.0 0a46.5 26.1 0 1 0 -93.0 0zM402.5 435.9a41.5 21.3 0 1 0 83.0 0a41.5 21.3 0 1 0 -83.0 0z"/></svg>
<div style="left:0px;top:0px;width:1246px;height:514px;border:1px solid #4472c0;border-right-width:1px;pointer-events:none"></div>
</body></html>
